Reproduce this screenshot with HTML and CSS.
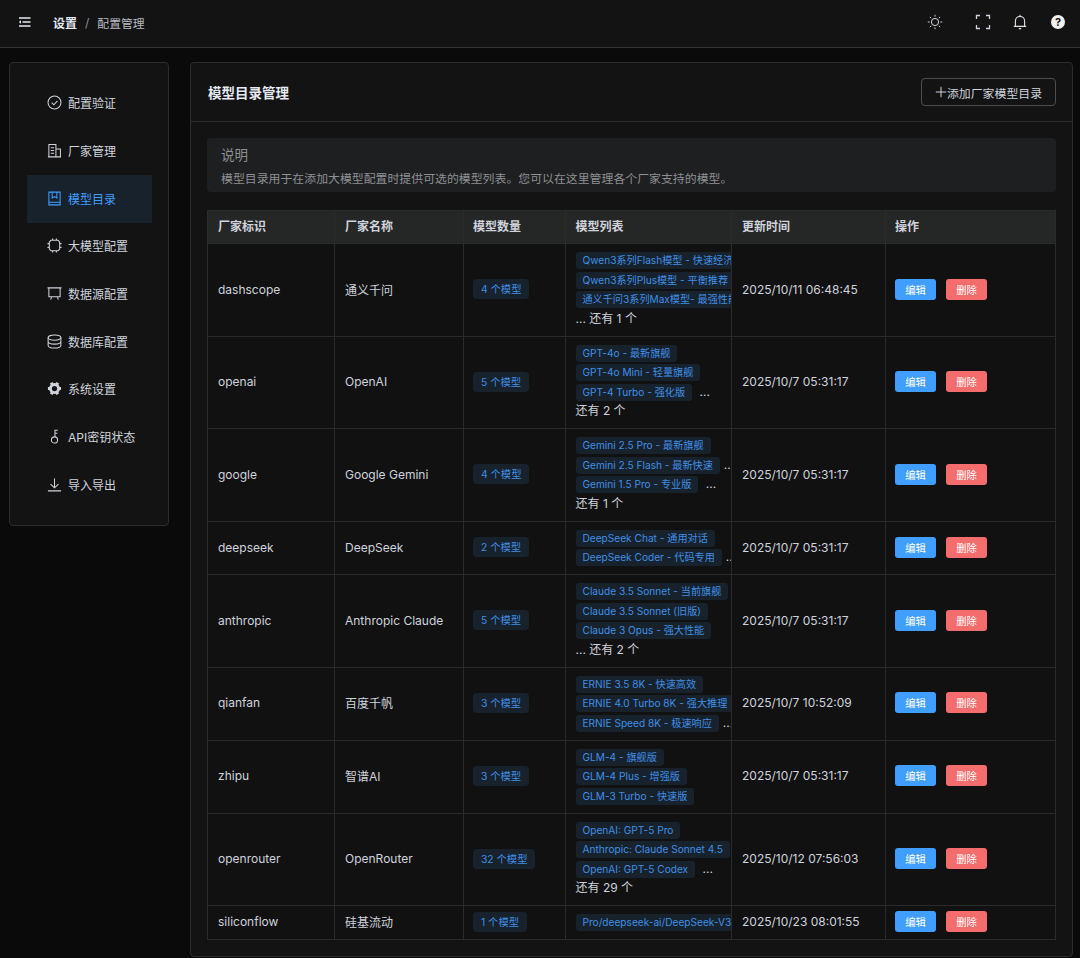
FILE: index.html
```html
<!DOCTYPE html>
<html lang="zh-CN">
<head>
<meta charset="utf-8">
<title>配置管理</title>
<link rel="stylesheet" href="styles.css">
</head>
<body>
<header class="topbar">
  <div class="top-left">
    <svg class="ic-ham" viewBox="0 0 13 10" width="13" height="10"><path d="M1 1h11.500M4.500 5h8M1 9h11.500" fill="none" stroke="#e5eaf3" stroke-width="1.500"/><path d="M3 3.200 0.800 5 3 6.800z" fill="#e5eaf3"/></svg>
    <nav class="crumbs"><b>设置</b><span class="sep">/</span><span class="cur">配置管理</span></nav>
  </div>
  <div class="top-right">
    <svg class="ti sun" viewBox="0 0 16 16" width="16" height="16"><g fill="none" stroke="#cfd3dc" stroke-width="1"><circle cx="8" cy="8" r="3.600"/><path d="M8 .8v1.800M8 13.400v1.800M.8 8h1.800M13.400 8h1.800M2.900 2.900l1.300 1.300M11.800 11.800l1.300 1.300M2.900 13.100l1.300-1.300M11.800 4.200l1.300-1.300"/></g></svg>
    <svg class="ti full" viewBox="0 0 16 16" width="16" height="16"><path d="M5 1.500H1.500V5M11 1.500h3.500V5M1.500 11v3.500H5M14.500 11v3.500H11" fill="none" stroke="#cfd3dc" stroke-width="1.300"/></svg>
    <svg class="ti bell" viewBox="0 0 16 16" width="16" height="16"><path d="M1.800 12.400h12.400M3.400 12.400V7a4.600 4.600 0 0 1 9.200 0v5.400M8 .8v1.600M6.800 14.600h2.400" fill="none" stroke="#dfe2e8" stroke-width="1.100"/></svg>
    <span class="help">?</span>
  </div>
</header>

<main class="layout">
  <aside class="side">
    <a class="item"><svg viewBox="0 0 16 16"><g fill="none" stroke="currentColor" stroke-width="1.100"><circle cx="8" cy="8" r="6.900"/><path d="M5 8.200 7.300 10.400 11.100 6.200"/></g></svg><span>配置验证</span></a>
    <a class="item"><svg viewBox="0 0 16 16"><path d="M1 14.800h14M2 14.800V1.500h7.500v13.300M9.500 6.500h4.800v8.300M4 5h3.500M4 8h3.500M4 11h3.500" fill="none" stroke="currentColor" stroke-width="1.100"/></svg><span>厂家管理</span></a>
    <a class="item on"><svg viewBox="0 0 16 16"><path d="M2 1.200h12v13.600H2zM2 12h12M5.500 1.200v6.300L8 6l2.500 1.500V1.200" fill="none" stroke="currentColor" stroke-width="1.100"/></svg><span>模型目录</span></a>
    <a class="item"><svg viewBox="0 0 16 16"><path d="M4.200 2.500h7.600l1.700 1.700v7.600l-1.700 1.700H4.200l-1.700-1.700V4.200zM.5 6h2M.5 10h2M13.500 6h2M13.500 10h2M6 .5v2M10 .5v2M6 13.500v2M10 13.500v2" fill="none" stroke="currentColor" stroke-width="1.100"/></svg><span>大模型配置</span></a>
    <a class="item"><svg viewBox="0 0 16 16"><path d="M.5 2h15M2 2v9.500h12V2M4.800 11.500l-.8 3M11.200 11.500l.8 3" fill="none" stroke="currentColor" stroke-width="1.100"/></svg><span>数据源配置</span></a>
    <a class="item"><svg viewBox="0 0 16 16"><g fill="none" stroke="currentColor" stroke-width="1.100"><ellipse cx="8" cy="3.800" rx="6.800" ry="2.800"/><path d="M1.200 3.800v8.400c0 1.500 3 2.800 6.800 2.800s6.800-1.300 6.800-2.800V3.800M1.200 8c0 1.500 3 2.800 6.800 2.800s6.800-1.300 6.800-2.800"/></g></svg><span>数据库配置</span></a>
    <a class="item"><svg viewBox="0 0 16 16"><g fill="none" stroke="currentColor"><circle cx="8" cy="8" r="4.300" stroke-width="3"/><path stroke-width="3.200" d="M1 8h2.500M12.500 8H15M4.500 1.900l1.200 2.100M10.300 12l1.200 2.100M4.500 14.100l1.200-2.100M10.300 4l1.200-2.100"/></g></svg><span>系统设置</span></a>
    <a class="item"><svg viewBox="0 0 16 16"><g fill="none" stroke="currentColor" stroke-width="1.100"><circle cx="8" cy="11.700" r="3.300"/><path d="M8.500 8.400V.8M8.500 1.300h3M8.500 4.500h2.500"/></g></svg><span>API密钥状态</span></a>
    <a class="item"><svg viewBox="0 0 16 16"><path d="M1 14.800h14M8 1.500v10M3.800 7.500 8 11.500l4.200-4" fill="none" stroke="currentColor" stroke-width="1.100"/></svg><span>导入导出</span></a>
  </aside>

  <section class="card">
    <div class="card-head">
      <h1>模型目录管理</h1>
      <button class="add"><svg viewBox="0 0 12 12" width="12" height="12"><path d="M6 .8v10.400M.8 6h10.400" stroke="#cfd3dc" fill="none"/></svg>添加厂家模型目录</button>
    </div>
    <div class="card-body">
      <div class="alert">
        <div class="alert-t">说明</div>
        <div class="alert-d">模型目录用于在添加大模型配置时提供可选的模型列表。您可以在这里管理各个厂家支持的模型。</div>
      </div>
      <table class="grid">
        <colgroup><col class="c1"><col class="c2"><col class="c3"><col class="c4"><col class="c5"><col class="c6"></colgroup>
        <thead><tr><th>厂家标识</th><th>厂家名称</th><th>模型数量</th><th>模型列表</th><th>更新时间</th><th>操作</th></tr></thead>
        <tbody>
          <tr><td>dashscope</td><td>通义千问</td><td><span class="tag n">4 个模型</span></td><td class="list"><span class="ln"><span class="tag">Qwen3系列Flash模型 - 快速经济</span></span><span class="ln"><span class="tag">Qwen3系列Plus模型 - 平衡推荐</span></span><span class="ln"><span class="tag">通义千问3系列Max模型- 最强性能</span></span><span class="ln">... 还有 1 个</span></td><td>2025/10/11 06:48:45</td><td class="ops"><button class="b blue">编辑</button><button class="b red">删除</button></td></tr>
          <tr><td>openai</td><td>OpenAI</td><td><span class="tag n">5 个模型</span></td><td class="list"><span class="ln"><span class="tag">GPT-4o - 最新旗舰</span></span><span class="ln"><span class="tag">GPT-4o Mini - 轻量旗舰</span></span><span class="ln"><span class="tag">GPT-4 Turbo - 强化版</span> ...</span><span class="ln">还有 2 个</span></td><td>2025/10/7 05:31:17</td><td class="ops"><button class="b blue">编辑</button><button class="b red">删除</button></td></tr>
          <tr><td>google</td><td>Google Gemini</td><td><span class="tag n">4 个模型</span></td><td class="list"><span class="ln"><span class="tag">Gemini 2.5 Pro - 最新旗舰</span></span><span class="ln"><span class="tag">Gemini 2.5 Flash - 最新快速</span>...</span><span class="ln"><span class="tag">Gemini 1.5 Pro - 专业版</span> ...</span><span class="ln">还有 1 个</span></td><td>2025/10/7 05:31:17</td><td class="ops"><button class="b blue">编辑</button><button class="b red">删除</button></td></tr>
          <tr><td>deepseek</td><td>DeepSeek</td><td><span class="tag n">2 个模型</span></td><td class="list"><span class="ln"><span class="tag">DeepSeek Chat - 通用对话</span></span><span class="ln"><span class="tag">DeepSeek Coder - 代码专用</span>...</span></td><td>2025/10/7 05:31:17</td><td class="ops"><button class="b blue">编辑</button><button class="b red">删除</button></td></tr>
          <tr><td>anthropic</td><td>Anthropic Claude</td><td><span class="tag n">5 个模型</span></td><td class="list"><span class="ln"><span class="tag">Claude 3.5 Sonnet - 当前旗舰</span></span><span class="ln"><span class="tag">Claude 3.5 Sonnet (旧版)</span></span><span class="ln"><span class="tag">Claude 3 Opus - 强大性能</span></span><span class="ln">... 还有 2 个</span></td><td>2025/10/7 05:31:17</td><td class="ops"><button class="b blue">编辑</button><button class="b red">删除</button></td></tr>
          <tr><td>qianfan</td><td>百度千帆</td><td><span class="tag n">3 个模型</span></td><td class="list"><span class="ln"><span class="tag">ERNIE 3.5 8K - 快速高效</span></span><span class="ln"><span class="tag">ERNIE 4.0 Turbo 8K - 强大推理</span></span><span class="ln"><span class="tag">ERNIE Speed 8K - 极速响应</span>...</span></td><td>2025/10/7 10:52:09</td><td class="ops"><button class="b blue">编辑</button><button class="b red">删除</button></td></tr>
          <tr><td>zhipu</td><td>智谱AI</td><td><span class="tag n">3 个模型</span></td><td class="list"><span class="ln"><span class="tag">GLM-4 - 旗舰版</span></span><span class="ln"><span class="tag">GLM-4 Plus - 增强版</span></span><span class="ln"><span class="tag">GLM-3 Turbo - 快速版</span></span></td><td>2025/10/7 05:31:17</td><td class="ops"><button class="b blue">编辑</button><button class="b red">删除</button></td></tr>
          <tr><td>openrouter</td><td>OpenRouter</td><td><span class="tag n">32 个模型</span></td><td class="list"><span class="ln"><span class="tag">OpenAI: GPT-5 Pro</span></span><span class="ln"><span class="tag">Anthropic: Claude Sonnet 4.5</span></span><span class="ln"><span class="tag">OpenAI: GPT-5 Codex</span> ...</span><span class="ln">还有 29 个</span></td><td>2025/10/12 07:56:03</td><td class="ops"><button class="b blue">编辑</button><button class="b red">删除</button></td></tr>
          <tr><td>siliconflow</td><td>硅基流动</td><td><span class="tag n">1 个模型</span></td><td class="list"><span class="ln"><span class="tag">Pro/deepseek-ai/DeepSeek-V3</span></span></td><td>2025/10/23 08:01:55</td><td class="ops"><button class="b blue">编辑</button><button class="b red">删除</button></td></tr>
        </tbody>
      </table>
    </div>
  </section>
</main>
</body>
</html>
```

FILE: styles.css
```css
* { box-sizing: border-box; }
html, body { margin: 0; height: 100%; }
body {
  height: 958px;
  overflow: hidden;
  background: #0a0a0a;
  color: #cfd3dc;
  font-family: Inter, "Noto Sans CJK SC", sans-serif;
  font-size: 12px;
}
.topbar {
  height: 48px;
  background: #131314;
  border-bottom: 1px solid #333436;
  display: flex;
  align-items: center;
  justify-content: space-between;
  padding: 0 15px 3px 18px;
}
.top-left { display: flex; align-items: center; gap: 22px; }
.ic-ham { display: block; }
.crumbs { display: flex; align-items: center; color: #b8bbc2; }
.crumbs b { color: #e5eaf3; font-weight: 700; }
.sep { margin: 0 8px; color: #8d9095; }
.cur { font-size: 11.800px; }
.top-right { display: flex; align-items: center; }
.ti { display: block; }
.sun { margin-right: 32px; }
.full { margin-right: 21px; }
.bell { margin-right: 23px; }
.help {
  width: 14px; height: 14px;
  border-radius: 50%;
  background: #f0f0f0;
  color: #141414;
  font-size: 11px;
  font-weight: 700;
  line-height: 14px;
  text-align: center;
}
.layout {
  display: flex;
  align-items: flex-start;
  gap: 21px;
  padding: 14px 8px 0 9px;
}
.side {
  width: 160px;
  flex: none;
  background: #131314;
  border: 1px solid #2c2d2f;
  border-radius: 4px;
  padding: 17px 16px 17px 17px;
  height: 464px;
}
.item {
  display: flex;
  align-items: center;
  gap: 6px;
  height: 47.700px;
  padding: 0 0 2px 20px;
  color: #cfd3dc;
  font-size: 12px;
}
.item svg { flex: none; width: 15px; height: 15px; }
.item.on { background: #18222c; color: #409eff; }
.card {
  flex: 1;
  height: 895px;
  background: #131314;
  border: 1px solid #2c2d2f;
  border-radius: 4px;
}
.card-head {
  height: 59px;
  border-bottom: 1px solid #2c2d2f;
  display: flex;
  align-items: center;
  justify-content: space-between;
  padding: 0 16px 0 17px;
}
h1 { margin: 0; font-size: 13.500px; font-weight: 700; color: #e5eaf3; }
.add {
  display: flex;
  align-items: center;
  justify-content: center;
  width: 135px;
  height: 28px;
  padding: 0;
  background: transparent;
  border: 1px solid #4c4d4f;
  border-radius: 4px;
  color: #cfd3dc;
  font: inherit;
  font-size: 11.900px;
}
.card-body { padding: 16px 16px 0; }
.alert {
  height: 54px;
  background: #1e1f20;
  border-radius: 4px;
  padding: 8px 14px;
  color: #8d9095;
}
.alert-t { font-size: 13.500px; line-height: 19px; }
.alert-d { font-size: 11.900px; line-height: 19px; margin-top: 4px; white-space: nowrap; }
.grid {
  margin-top: 18px;
  width: 848px;
  table-layout: fixed;
  border-collapse: collapse;
  border: 1px solid #333436;
  color: #cfd3dc;
}
.c1 { width: 127px; }
.c2 { width: 129px; }
.c3 { width: 101.500px; }
.c4 { width: 166.500px; }
.c5 { width: 154px; }
.c6 { width: 170px; }
th, td { border: 1px solid #2a2b2d; text-align: left; padding: 0 10px; overflow: hidden; white-space: nowrap; }
th {
  height: 33px;
  padding-bottom: 3px;
  background: #252626;
  color: #cfd3dc;
  font-weight: 700;
  font-size: 12px;
}
th:nth-child(3), th:nth-child(6) { padding-left: 9px; }
td { background: #111112; padding-bottom: 1.500px; }
td:nth-child(3) { padding-left: 9px; }
td.list { padding: 6.250px 0 7.250px 10px; }
td.ops { padding-left: 9px; }
.ln { display: block; height: 19.500px; line-height: 19.500px; white-space: nowrap; }
.tag {
  display: inline-block;
  height: 17px;
  line-height: 17px;
  padding: 0 7px;
  border-radius: 3px;
  background: #18222c;
  color: #3f8fe6;
  font-size: 10.150px;
  white-space: nowrap;
  vertical-align: middle;
}
.list .tag { margin-right: 4px; }
.tag.n { height: 20px; line-height: 20px; padding: 0 8px; border-radius: 4px; font-size: 10.300px; }
.ops { font-size: 0; }
.b {
  width: 41px;
  height: 21px;
  padding: 0;
  border: 0;
  border-radius: 3px;
  color: #fff;
  font-family: inherit;
  font-size: 10.300px;
  margin-right: 10px;
  vertical-align: middle;
}
.blue { background: #409eff; }
.red { background: #f56c6c; }
```
